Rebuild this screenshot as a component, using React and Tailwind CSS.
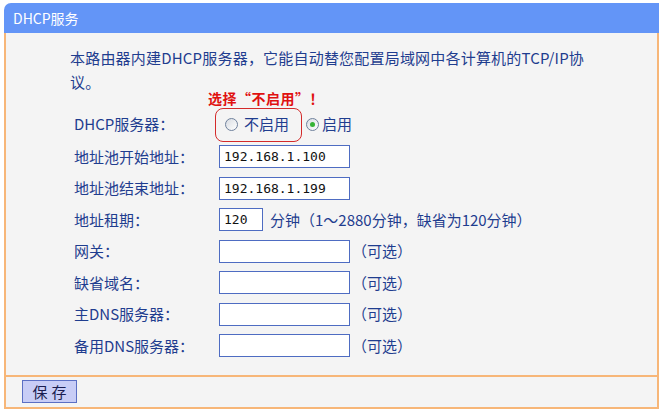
function Radio({ checked }) {
    return (
        <span className="relative inline-flex w-[13px] h-[13px] rounded-full border border-[#6f819c] bg-gradient-to-br from-[#d8dce2] to-white items-center justify-center">
            {checked && <span className="w-[5px] h-[5px] rounded-full bg-[#35b335]" />}
        </span>
    );
}

function Field({ label, children }) {
    return (
        <div className="flex items-center h-[31.5px]">
            <div className="w-[213px] pl-[68px] shrink-0 whitespace-nowrap">{label}</div>
            <div className="flex items-center">{children}</div>
        </div>
    );
}

function TextBox({ value = "", w = "w-[131px]" }) {
    return (
        <div className={`${w} h-[23px] bg-white border border-[#4e6cc2] flex items-center pl-[4px] font-['DejaVu_Sans_Mono',monospace] text-[13px] text-[#111]`}>
            {value}
        </div>
    );
}

function Hint({ children }) {
    return <span className="ml-[2px] whitespace-nowrap">{children}</span>;
}

export default function App() {
    return (
        <div className="w-[662px] h-[412px] bg-white pt-[3px] pl-[4px] font-['Noto_Sans_CJK_SC',sans-serif] text-[15px] text-[#1f3d8f]">
            <div className="w-[655px]">
                <div className="h-[30px] bg-[#6395f7] rounded-tl-[7px] flex items-center pl-[9px] text-white text-[14px]">
                    DHCP服务
                </div>

                <div className="h-[342px] bg-[#f4f4f4] border-x-2 border-[#f7b678] pt-[13px]">
                    <p className="pl-[64px] leading-[24px] whitespace-nowrap tracking-[0.2px]">
                        本路由器内建DHCP服务器，它能自动替您配置局域网中各计算机的TCP/IP协
                        <br />
                        议。
                    </p>

                    <div className="pl-[202px] -mt-[3px] h-[14px] leading-[14px] text-[14px] font-bold text-[#e01010] tracking-[0.5px]">
                        选择“不启用”！
                    </div>

                    <div className="flex items-center h-[33px] mt-[3px]">
                        <div className="w-[213px] pl-[68px] shrink-0 whitespace-nowrap">DHCP服务器：</div>
                        <div className="flex items-center ml-[-4px]">
                            <div className="h-[34px] w-[87px] border border-[#d42a2a] rounded-[8px] flex items-center pl-[9px] gap-[6px]">
                                <Radio />
                                <span>不启用</span>
                            </div>
                            <div className="flex items-center ml-[4px] gap-[3px]">
                                <Radio checked />
                                <span>启用</span>
                            </div>
                        </div>
                    </div>

                    <Field label="地址池开始地址：">
                        <TextBox value="192.168.1.100" />
                    </Field>
                    <Field label="地址池结束地址：">
                        <TextBox value="192.168.1.199" />
                    </Field>
                    <Field label="地址租期：">
                        <TextBox value="120" w="w-[44px]" />
                        <span className="ml-[7px] whitespace-nowrap">分钟（1～2880分钟，缺省为120分钟）</span>
                    </Field>
                    <Field label="网关：">
                        <TextBox />
                        <Hint>（可选）</Hint>
                    </Field>
                    <Field label="缺省域名：">
                        <TextBox />
                        <Hint>（可选）</Hint>
                    </Field>
                    <Field label="主DNS服务器：">
                        <TextBox />
                        <Hint>（可选）</Hint>
                    </Field>
                    <Field label="备用DNS服务器：">
                        <TextBox />
                        <Hint>（可选）</Hint>
                    </Field>
                </div>

                <div className="h-[34px] bg-[#f4f4f4] border-2 border-[#f7b678] pt-[3px] pl-[16px]">
                    <button
                        type="button"
                        className="w-[55px] h-[23px] bg-[#c8cdf6] border border-[#5b6fc4] text-[15px] leading-none text-[#1a1d50] tracking-[4px] pl-[4px]"
                    >
                        保存
                    </button>
                </div>
            </div>
        </div>
    );
}
